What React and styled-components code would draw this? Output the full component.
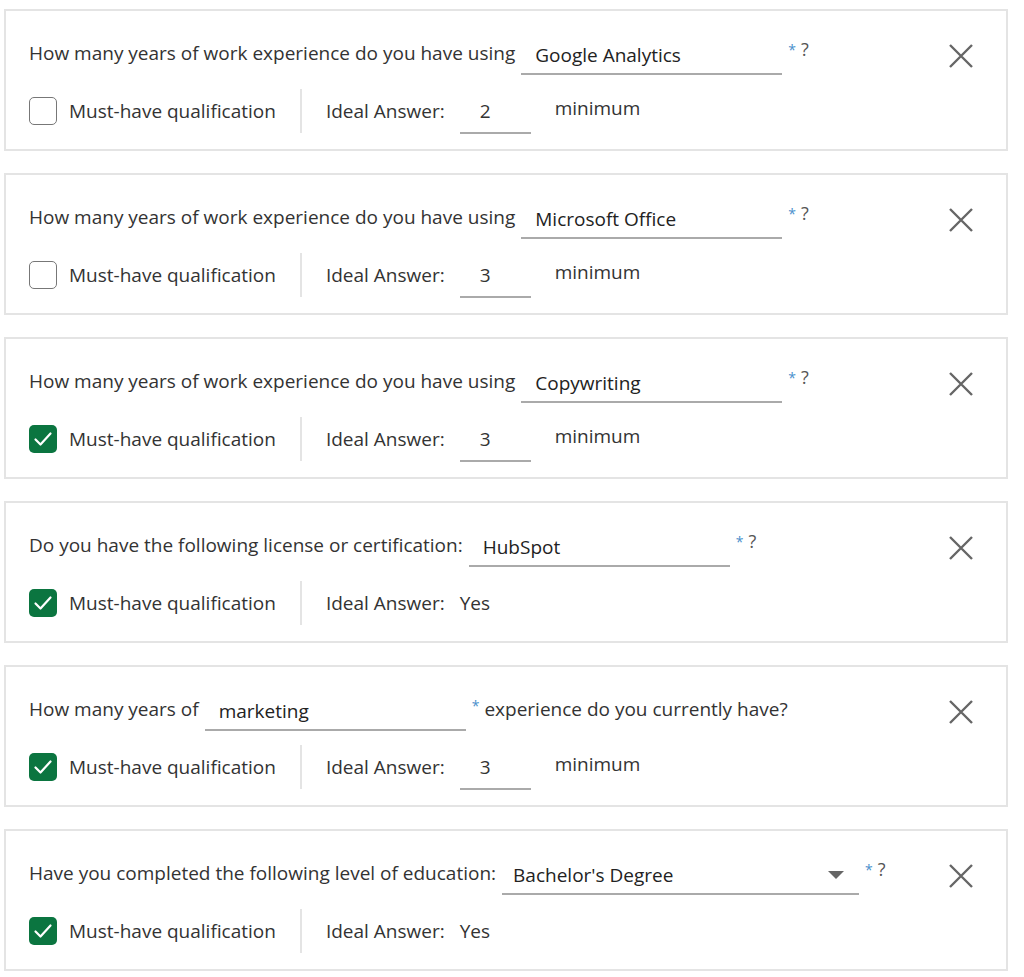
import styled, { createGlobalStyle } from "styled-components";

const GlobalStyle = createGlobalStyle`
  body {
    margin: 0;
    padding: 9px 16px 0 4px;
    background: #fff;
    font-family: "Open Sans", "Noto Sans", sans-serif;
    color: #333;
  }
`;

const questions = [
  { type: "years", before: "How many years of work experience do you have using", value: "Google Analytics", ideal: "2", must: false },
  { type: "years", before: "How many years of work experience do you have using", value: "Microsoft Office", ideal: "3", must: false },
  { type: "years", before: "How many years of work experience do you have using", value: "Copywriting", ideal: "3", must: true },
  { type: "yes", before: "Do you have the following license or certification:", value: "HubSpot", must: true },
  { type: "years", before: "How many years of", value: "marketing", after: "experience do you currently have?", ideal: "3", must: true },
  { type: "select", before: "Have you completed the following level of education:", value: "Bachelor's Degree", must: true },
];

const Check = ({ on }) => (
  <Box $on={on}>
    {on && (
      <svg width="22" height="22" viewBox="0 0 22 22">
        <path d="M3.5 11.5l5 5L18.5 5.5" fill="none" stroke="#fff" strokeWidth="2.2" strokeLinecap="round" strokeLinejoin="round" />
      </svg>
    )}
  </Box>
);

const CloseIcon = () => (
  <svg width="26" height="26" viewBox="0 0 26 26">
    <path d="M2 2l22 22M24 2L2 24" stroke="#666" strokeWidth="2.4" />
  </svg>
);

const App = () => {
  return (
    <>
      <GlobalStyle />
      <List>
        {questions.map((q, i) => (
          <Card key={i}>
            <Body>
              <Question>
                <span>{q.before}</span>
                <Field $select={q.type === "select"}>
                  {q.value}
                  {q.type === "select" && <Caret />}
                </Field>
                <Req>*</Req>
                {q.after ? <After>{q.after}</After> : <Mark>?</Mark>}
              </Question>
              <Options>
                <Check on={q.must} />
                <Label>Must-have qualification</Label>
                <Divider />
                <Label>Ideal Answer:</Label>
                {q.type === "years" ? (
                  <>
                    <Small>{q.ideal}</Small>
                    <Unit>minimum</Unit>
                  </>
                ) : (
                  <Yes>Yes</Yes>
                )}
              </Options>
            </Body>
            <Close>
              <CloseIcon />
            </Close>
          </Card>
        ))}
      </List>
    </>
  );
};

const List = styled.div`
  display: flex;
  flex-direction: column;
  gap: 22px;
`;

const Card = styled.div`
  display: flex;
  justify-content: space-between;
  height: 142px;
  box-sizing: border-box;
  border: 2px solid #e4e4e4;
  padding: 21px 32px 0 23px;
`;

const Body = styled.div`
  display: flex;
  flex-direction: column;
`;

const Question = styled.div`
  display: flex;
  align-items: center;
  height: 42px;
  font-size: 19px;
  color: #333;
  white-space: nowrap;
`;

const Field = styled.div`
  position: relative;
  width: ${(p) => (p.$select ? "357px" : "261px")};
  height: 43px;
  box-sizing: border-box;
  margin: 0 0 -1px 6px;
  padding: 10px 0 0 ${(p) => (p.$select ? "11px" : "14px")};
  border-bottom: 2px solid #aaa;
  font-size: 19px;
  color: #222;
`;

const Caret = styled.span`
  position: absolute;
  right: 15px;
  top: 19px;
  border-left: 8px solid transparent;
  border-right: 8px solid transparent;
  border-top: 8px solid #666;
`;

const Req = styled.span`
  align-self: flex-start;
  margin: 8px 0 0 6px;
  font-size: 14px;
  color: #4a8fcc;
`;

const Mark = styled.span`
  align-self: flex-start;
  margin: 5px 0 0 5px;
  font-size: 18px;
  color: #555;
`;

const After = styled.span`
  margin-left: 5px;
`;

const Options = styled.div`
  display: flex;
  align-items: center;
  height: 44px;
  margin-top: 15px;
`;

const Box = styled.div`
  display: flex;
  align-items: center;
  justify-content: center;
  width: 28px;
  height: 28px;
  box-sizing: border-box;
  border-radius: 5px;
  border: ${(p) => (p.$on ? "none" : "1.5px solid #777")};
  background: ${(p) => (p.$on ? "#0b7540" : "#fff")};
  margin-right: 12px;
`;

const Label = styled.span`
  font-size: 19px;
  color: #333;
`;

const Divider = styled.div`
  width: 2px;
  height: 44px;
  background: #e4e4e4;
  margin: 0 24px;
`;

const Small = styled.div`
  width: 71px;
  height: 40px;
  box-sizing: border-box;
  margin: 0 0 -1px 15px;
  padding: 4px 0 0 20px;
  border-bottom: 2px solid #aaa;
  font-size: 19px;
  color: #333;
  align-self: flex-end;
`;

const Unit = styled.span`
  margin: 0 0 6px 24px;
  font-size: 19px;
  color: #333;
`;

const Yes = styled.span`
  margin-left: 15px;
  font-size: 19px;
  color: #333;
`;

const Close = styled.button`
  align-self: flex-start;
  margin-top: 11px;
  padding: 0;
  border: none;
  background: none;
  cursor: pointer;
  line-height: 0;
`;

export default App;
